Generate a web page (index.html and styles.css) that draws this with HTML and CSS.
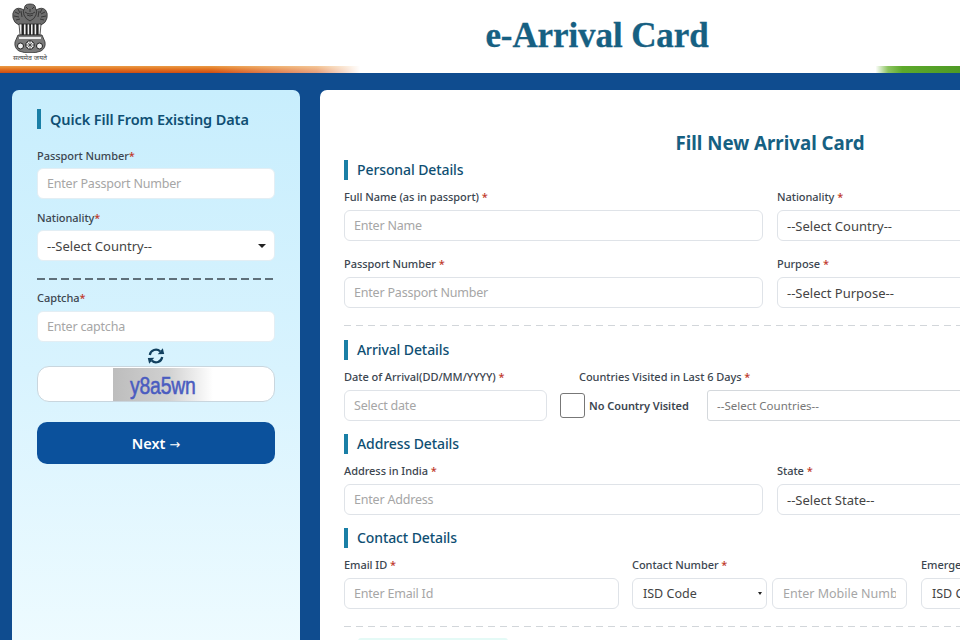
FILE: index.html
```html
<!DOCTYPE html>
<html lang="en">
<head>
<meta charset="utf-8">
<title>e-Arrival Card</title>
<link rel="stylesheet" href="styles.css">
</head>
<body>
<header class="site-header">
  <div class="brand-row">
    <div class="emblem">
      <svg class="emblem-art" width="36" height="50" viewBox="0 0 36 50" aria-hidden="true">
        <g fill="#6d6d6d" stroke="#2b2b2b" stroke-width="0.8">
          <path d="M12 7Q6 3.500 2.500 7 0 10 1 15t6 7h22q5-2 6-7t-1.500-8Q30 3.500 24 7z"/>
          <path d="M12.500 5q0-4 5.500-4t5.500 4q2 3 .5 7t-6 6q-4.500-2-6-6t.500-7z"/>
        </g>
        <g fill="none" stroke="#1f1f1f" stroke-width="0.7">
          <path d="M14 4l2 2M22 4l-2 2M13 9q5 4 10 0M15 12q3 2 6 0M18 6v3"/>
          <path d="M3 9l4 2M2 13l5 1M4 17l4-1M6 6l2 4M9 8l1 6"/>
          <path d="M33 9l-4 2M34 13l-5 1M32 17l-4-1M30 6l-2 4M27 8l-1 6"/>
        </g>
        <path d="M7 21h22l-1 11H8z" fill="#efefef" stroke="#2b2b2b" stroke-width="0.8"/>
        <g fill="#222">
          <rect x="9.500" y="21" width="2.400" height="11"/>
          <rect x="13.600" y="21" width="2" height="11"/>
          <rect x="17.200" y="21" width="1.800" height="11"/>
          <rect x="20.600" y="21" width="2" height="11"/>
          <rect x="24.200" y="21" width="2.400" height="11"/>
        </g>
        <path d="M6 32h24l3 7q1 6-4 9-5 2-11 2t-11-2q-5-3-4-9z" fill="#7b7b7b" stroke="#2b2b2b" stroke-width="0.8"/>
        <path d="M7 34h22v2H7z" fill="#e8e8e8"/>
        <g fill="#f2f2f2" stroke="#1f1f1f" stroke-width="1">
          <circle cx="18" cy="42" r="4.200"/>
          <circle cx="8.500" cy="43" r="3"/>
          <circle cx="27.500" cy="43" r="3"/>
        </g>
        <path d="M18 38v8M14 42h8M15.200 39.200l5.600 5.600M20.800 39.200l-5.600 5.600" stroke="#1f1f1f" stroke-width="0.6"/>
      </svg>
      <span class="motto">सत्यमेव जयते</span>
    </div>
    <h1 class="site-title">e-Arrival Card</h1>
  </div>
  <div class="tricolor"></div>
</header>

<main class="page">
  <aside class="quick-card">
    <h2 class="section-title quick-title">Quick Fill From Existing Data</h2>
    <div class="field">
      <label class="field-label">Passport Number<span class="req">*</span></label>
      <input class="control quick-control" placeholder="Enter Passport Number">
    </div>
    <div class="field">
      <label class="field-label">Nationality<span class="req">*</span></label>
      <div class="select-box quick-control"><span>--Select Country--</span><i class="caret"></i></div>
    </div>
    <hr class="quick-rule">
    <div class="field captcha-field">
      <label class="field-label">Captcha<span class="req">*</span></label>
      <input class="control quick-control" placeholder="Enter captcha">
    </div>
    <div class="refresh">
      <svg width="18" height="16" viewBox="0 0 18 16" aria-hidden="true">
        <path d="M2.800 7A6.200 6.200 0 0 1 13.200 3.400" fill="none" stroke="#12405f" stroke-width="2.200"/>
        <path d="M10.800 6.200l6.400-.2-1.400-5.800z" fill="#12405f"/>
        <path d="M15.200 9A6.200 6.200 0 0 1 4.800 12.600" fill="none" stroke="#12405f" stroke-width="2.200"/>
        <path d="M7.200 9.800l-6.400.2 1.400 5.800z" fill="#12405f"/>
      </svg>
    </div>
    <div class="captcha-box"><div class="captcha-img"><span class="captcha-text">y8a5wn</span></div></div>
    <button class="next-btn" type="button">Next <span class="next-arrow">→</span></button>
  </aside>

  <section class="form-card">
    <h2 class="form-title">Fill New Arrival Card</h2>

    <h3 class="section-title form-section">Personal Details</h3>
    <div class="row row-two">
      <div class="field"><label class="field-label">Full Name (as in passport) <span class="req">*</span></label><input class="control" placeholder="Enter Name"></div>
      <div class="field"><label class="field-label">Nationality <span class="req">*</span></label><div class="select-box"><span>--Select Country--</span></div></div>
    </div>
    <div class="row row-two">
      <div class="field"><label class="field-label">Passport Number <span class="req">*</span></label><input class="control" placeholder="Enter Passport Number"></div>
      <div class="field"><label class="field-label">Purpose <span class="req">*</span></label><div class="select-box"><span>--Select Purpose--</span></div></div>
    </div>
    <hr class="rule">

    <h3 class="section-title form-section">Arrival Details</h3>
    <div class="row row-arrival">
      <div class="field"><label class="field-label">Date of Arrival(DD/MM/YYYY) <span class="req">*</span></label><input class="control" placeholder="Select date"></div>
      <div class="field visited">
        <label class="field-label visited-label">Countries Visited in Last 6 Days <span class="req">*</span></label>
        <div class="visited-row">
          <span class="checkbox"></span>
          <span class="check-text">No Country Visited</span>
          <div class="select-box multi"><span>--Select Countries--</span></div>
        </div>
      </div>
    </div>

    <h3 class="section-title form-section">Address Details</h3>
    <div class="row row-two">
      <div class="field"><label class="field-label">Address in India <span class="req">*</span></label><input class="control" placeholder="Enter Address"></div>
      <div class="field"><label class="field-label">State <span class="req">*</span></label><div class="select-box"><span>--Select State--</span></div></div>
    </div>

    <h3 class="section-title form-section section-after">Contact Details</h3>
    <div class="row row-contact">
      <div class="field"><label class="field-label">Email ID <span class="req">*</span></label><input class="control" placeholder="Enter Email Id"></div>
      <div class="field"><label class="field-label">Contact Number <span class="req">*</span></label>
        <div class="pair">
          <div class="select-box isd"><span>ISD Code</span><i class="caret small"></i></div>
          <input class="control" placeholder="Enter Mobile Number">
        </div>
      </div>
      <div class="field"><label class="field-label">Emergency Contact Number <span class="req">*</span></label><div class="select-box isd"><span>ISD Code</span></div></div>
    </div>
    <hr class="rule rule-last">
    <div class="next-section"></div>
  </section>
</main>
</body>
</html>
```

FILE: styles.css
```css
* { box-sizing: border-box; }
html, body { margin: 0; height: 640px; overflow: hidden; }
body {
  width: 960px;
  background: #0f4c8f;
  font-family: "Noto Sans", "Open Sans", sans-serif;
  color: #333;
}

.site-header { height: 73px; background: #fff; display: flex; flex-direction: column; }
.brand-row { height: 66px; display: flex; align-items: flex-start; }
.emblem {
  width: 60px;
  flex: none;
  display: flex;
  flex-direction: column;
  align-items: center;
  padding-top: 3px;
}
.emblem-art { display: block; }
.motto { font-size: 7px; line-height: 8px; color: #444; white-space: nowrap; margin-top: 1px; }
.site-title {
  margin: 0;
  width: 1074px;
  flex: none;
  font-family: "Liberation Serif", serif;
  font-size: 35px;
  line-height: 72px;
  letter-spacing: -0.1px;
  font-weight: 700;
  color: #166082;
  text-align: center;
  -webkit-text-stroke: 0.3px #166082;
}
.tricolor {
  height: 7px;
  background:
    linear-gradient(90deg, transparent 91.200%, #8cc460 92.500%, #5da92b 94%, #4e9a25 100%),
    linear-gradient(90deg, transparent 22%, rgba(255, 255, 255, 0.45) 33%, rgba(255, 255, 255, 0.8) 36%, #fff 37.500%),
    linear-gradient(180deg, #ea9c45 0%, #e2701f 50%, #cc4c14 100%);
}

.page { display: flex; gap: 20px; padding: 17px 0 0 12px; height: 567px; overflow: hidden; }

.quick-card {
  flex: none;
  width: 288px;
  height: 560px;
  padding: 19px 25px 0;
  border-radius: 7px 7px 0 0;
  background: linear-gradient(180deg, #c8eefd 0%, #d8f3fe 50%, #eefbff 100%);
}
.form-card {
  flex: none;
  width: 800px;
  height: 560px;
  padding: 42px 24px 0;
  border-radius: 7px 0 0 0;
  background: #fff;
}

.section-title {
  margin: 0;
  height: 20px;
  padding-left: 9px;
  border-left: 4px solid #1a7fa6;
  font-size: 14.500px;
  line-height: 20px;
  font-weight: 600;
  letter-spacing: -0.1px;
  color: #0f4f73;
  white-space: nowrap;
}
.form-section { font-size: 14px; font-weight: 500; }
.section-after { margin-top: 13px; }
.quick-title { margin-bottom: 19px; }
.form-title {
  margin: 0 0 6px;
  width: 852px;
  font-size: 18.700px;
  line-height: 22px;
  font-weight: 700;
  color: #166082;
  text-align: center;
}

.field { display: flex; flex-direction: column; min-width: 0; }
.field-label {
  font-size: 11px;
  line-height: 16px;
  margin-bottom: 5px;
  color: #3c4650;
  font-weight: 500;
  letter-spacing: -0.05px;
  white-space: nowrap;
}
.quick-card .field-label { margin-bottom: 4px; }
.req { color: #c0392b; }

.control, .select-box {
  width: 100%;
  height: 31px;
  border: 1px solid #dfe3e8;
  border-radius: 6px;
  background: #fff;
  padding: 0 9px;
  font-family: inherit;
  font-size: 12.500px;
  color: #444;
  outline: none;
}
.control { letter-spacing: -0.2px; }
.control::placeholder { color: #a6a6a6; opacity: 1; }
.select-box {
  display: flex;
  align-items: center;
  justify-content: space-between;
  white-space: nowrap;
  overflow: hidden;
  font-size: 13px;
}
.select-box.isd { font-size: 12.500px; padding-left: 10px; }
.quick-control { border-color: #e3eef4; }
.caret {
  width: 0; height: 0;
  border-left: 4px solid transparent;
  border-right: 4px solid transparent;
  border-top: 4px solid #222;
  margin-right: -1px;
  flex: none;
}
.caret.small { border-left-width: 2px; border-right-width: 2px; border-top-width: 3px; margin-right: -5px; }

.quick-card .field { margin-bottom: 11px; }
.quick-card .field:has(+ .quick-rule) { margin-bottom: 17px; }
.quick-card .captcha-field { margin-bottom: 0; }
.quick-card .captcha-field .field-label { margin-bottom: 5px; }
.quick-rule {
  border: 0;
  height: 2px;
  margin: 0 0 10px;
  background: repeating-linear-gradient(90deg, #5f707a 0 8px, transparent 8px 12px);
}
.refresh { display: flex; justify-content: center; height: 24px; padding-top: 6px; }
.captcha-box {
  height: 36px;
  border: 1px solid #c9d6de;
  border-radius: 12px;
  background: #fff;
  padding: 1px 0 1px 75px;
}
.captcha-img {
  width: 100px;
  height: 33px;
  background: linear-gradient(90deg, #bdbdbd 0%, #d0d0d0 55%, #fff 100%);
  padding-left: 17px;
  overflow: hidden;
}
.captcha-text {
  display: inline-block;
  font-family: "Liberation Sans", sans-serif;
  font-size: 22px;
  line-height: 33px;
  color: #4a5cc0;
  letter-spacing: -0.2px;
  transform: translateY(1px) scale(0.88, 1.1);
  transform-origin: left center;
  -webkit-text-stroke: 0.5px #4a5cc0;
}
.next-btn {
  display: block;
  width: 100%;
  height: 42px;
  margin-top: 20px;
  border: 0;
  border-radius: 10px;
  background: #0b519c;
  color: #fff;
  font-family: inherit;
  font-size: 14.500px;
  font-weight: 600;
}
.next-arrow { font-family: "DejaVu Sans", sans-serif; font-size: 13px; font-weight: 400; }

.row { display: grid; column-gap: 14px; margin-top: 9px; }
.row-two { grid-template-columns: 419px 340px; }
.row-two + .row-two { margin-top: 15px; }
.rule {
  border: 0;
  height: 1px;
  width: 640px;
  margin: 17px 0 14px;
  background: repeating-linear-gradient(90deg, #d2d6da 0 7px, transparent 7px 12px);
}
.row-arrival { grid-template-columns: 203px 1fr; column-gap: 13px; margin-bottom: 13px; }
.visited-label { margin-left: 19px; }
.visited-row { display: flex; align-items: center; height: 31px; }
.checkbox {
  flex: none;
  width: 25px;
  height: 25px;
  border: 1px solid #777;
  border-radius: 3px;
  background: #fff;
}
.check-text { font-size: 11px; font-weight: 600; color: #3c4650; margin-left: 4px; width: 118px; flex: none; white-space: nowrap; letter-spacing: -0.05px; }
.multi { width: 300px; flex: none; font-size: 11.500px; color: #777; border-color: #d4d8dc; border-radius: 3px; }
.row-contact { grid-template-columns: 275px 275px 200px; column-gap: 13px; }
.row-contact > .field:last-child { margin-left: 1px; }
.pair { display: grid; grid-template-columns: 135px 135px; column-gap: 5px; }
.pair .control { padding: 0 10px; letter-spacing: 0; }
.rule-last { margin-bottom: 11px; }
.next-section { height: 20px; width: 150px; margin-left: 14px; background: #e4faf6; border-radius: 3px; }
```
